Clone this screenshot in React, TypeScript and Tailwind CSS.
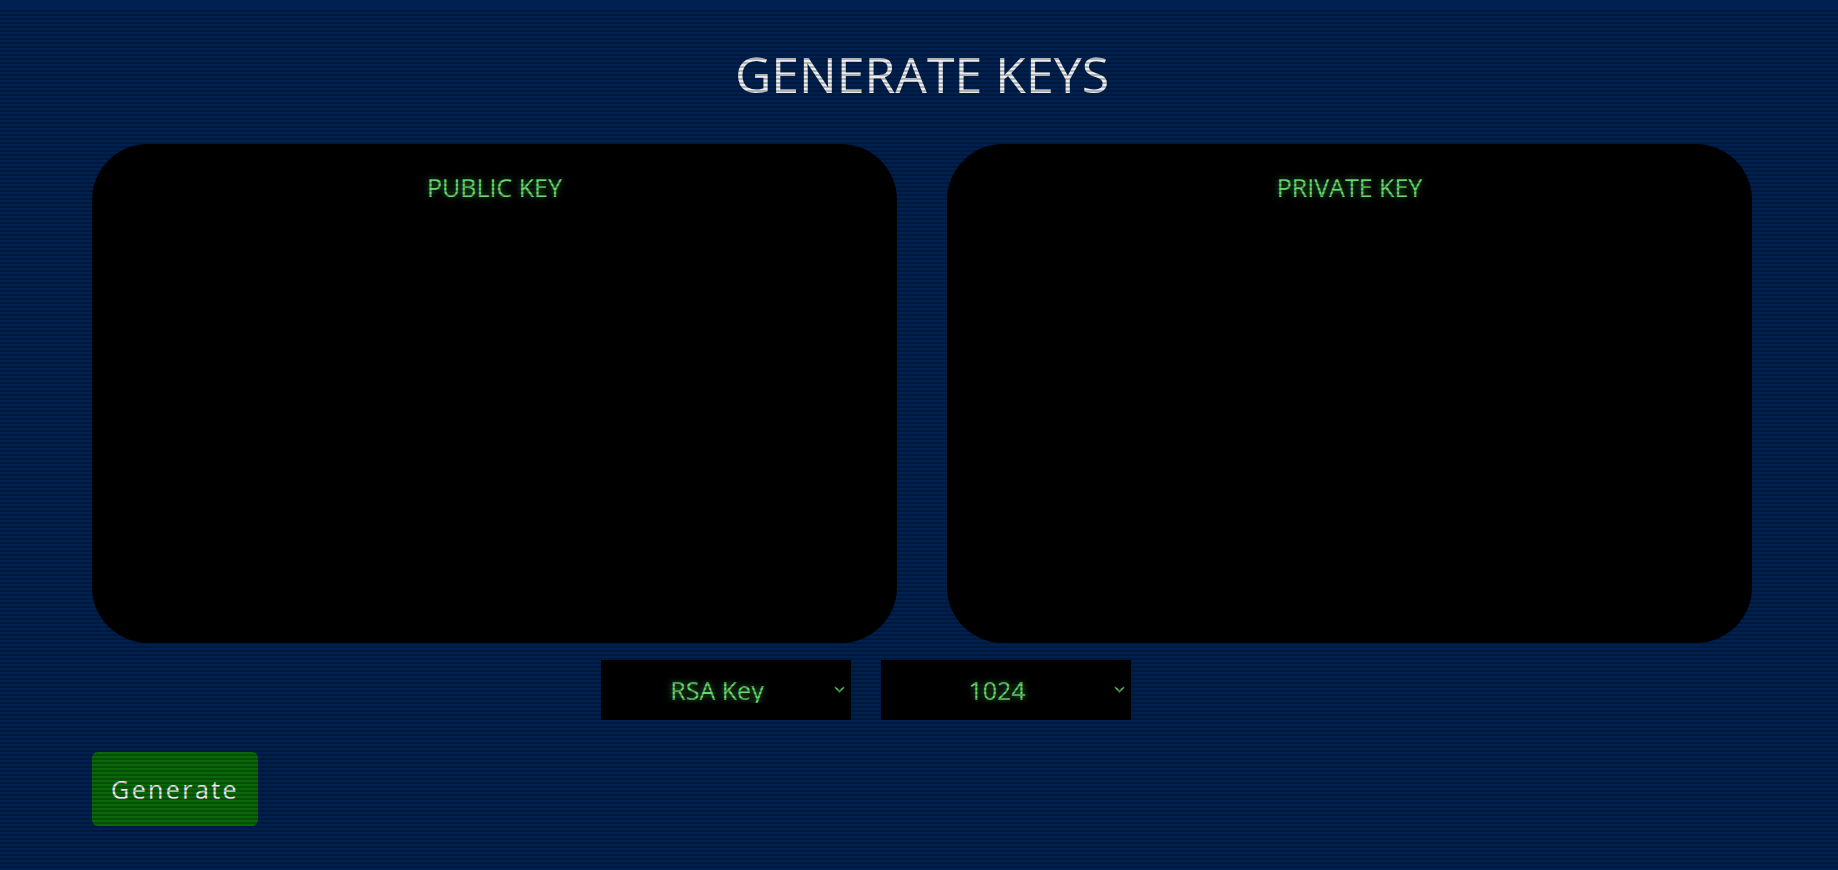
import { useState } from 'react';

function KeySelect({ value, options, onChange }: { value: string; options: string[]; onChange: (v: string) => void }) {
  return (
    <div className="relative w-[250px] h-[60px]">
      <select
        value={value}
        onChange={(e) => onChange(e.target.value)}
        className="appearance-none w-full h-full bg-black text-[#6ad86e] text-[25px] leading-none text-center [text-align-last:center] pr-[18px] outline-none [text-shadow:0_0_7px_rgba(100,235,110,0.6)]"
      >
        {options.map((o) => (
          <option key={o} value={o}>
            {o}
          </option>
        ))}
      </select>
      {/* chevron */}
      <svg
        className="absolute right-[6px] top-[26px] pointer-events-none"
        width="11"
        height="7"
        viewBox="0 0 11 7"
        fill="none"
      >
        <path d="M1 1l4.5 4.5L10 1" stroke="#5cc463" strokeWidth="1.6" />
      </svg>
    </div>
  );
}

export default function App() {
  const [algo, setAlgo] = useState('RSA Key');
  const [size, setSize] = useState('1024');

  return (
    <div className="relative h-[870px] overflow-hidden bg-[#00214f] font-['Open_Sans',sans-serif]">
      <div className="pl-[92px] pr-[86px] pt-[49px]">
        <h1 className="text-center text-[50px] leading-none font-normal text-[#ececec]">GENERATE KEYS</h1>

        {/* Key panels */}
        <div className="mt-[45px] flex gap-[50px]">
          <div className="flex-1 h-[499px] bg-black rounded-[56px] pt-[31px]">
            <p className="text-center text-[25px] leading-none text-[#6ad86e] [text-shadow:0_0_6px_rgba(100,235,110,0.55)]">
              PUBLIC KEY
            </p>
          </div>
          <div className="flex-1 h-[499px] bg-black rounded-[56px] pt-[31px]">
            <p className="text-center text-[25px] leading-none text-[#6ad86e] [text-shadow:0_0_6px_rgba(100,235,110,0.55)]">
              PRIVATE KEY
            </p>
          </div>
        </div>

        {/* Options */}
        <div className="mt-[17px] ml-[509px] flex gap-[30px]">
          <KeySelect value={algo} options={['RSA Key', 'DSA Key', 'EC Key']} onChange={setAlgo} />
          <KeySelect value={size} options={['1024', '2048', '4096']} onChange={setSize} />
        </div>

        <button className="mt-[32px] w-[166px] h-[74px] rounded-[6px] bg-[#0a680a] text-[#f0f0f0] text-[25px] leading-none tracking-[2.4px]">
          Generate
        </button>
      </div>

      {/* CRT scanlines */}
      <div className="pointer-events-none absolute inset-x-0 bottom-0 top-[8px] bg-[linear-gradient(rgba(0,0,0,0)_50%,rgba(0,0,0,0.25)_50%)] bg-[length:100%_4px]" />
    </div>
  );
}
